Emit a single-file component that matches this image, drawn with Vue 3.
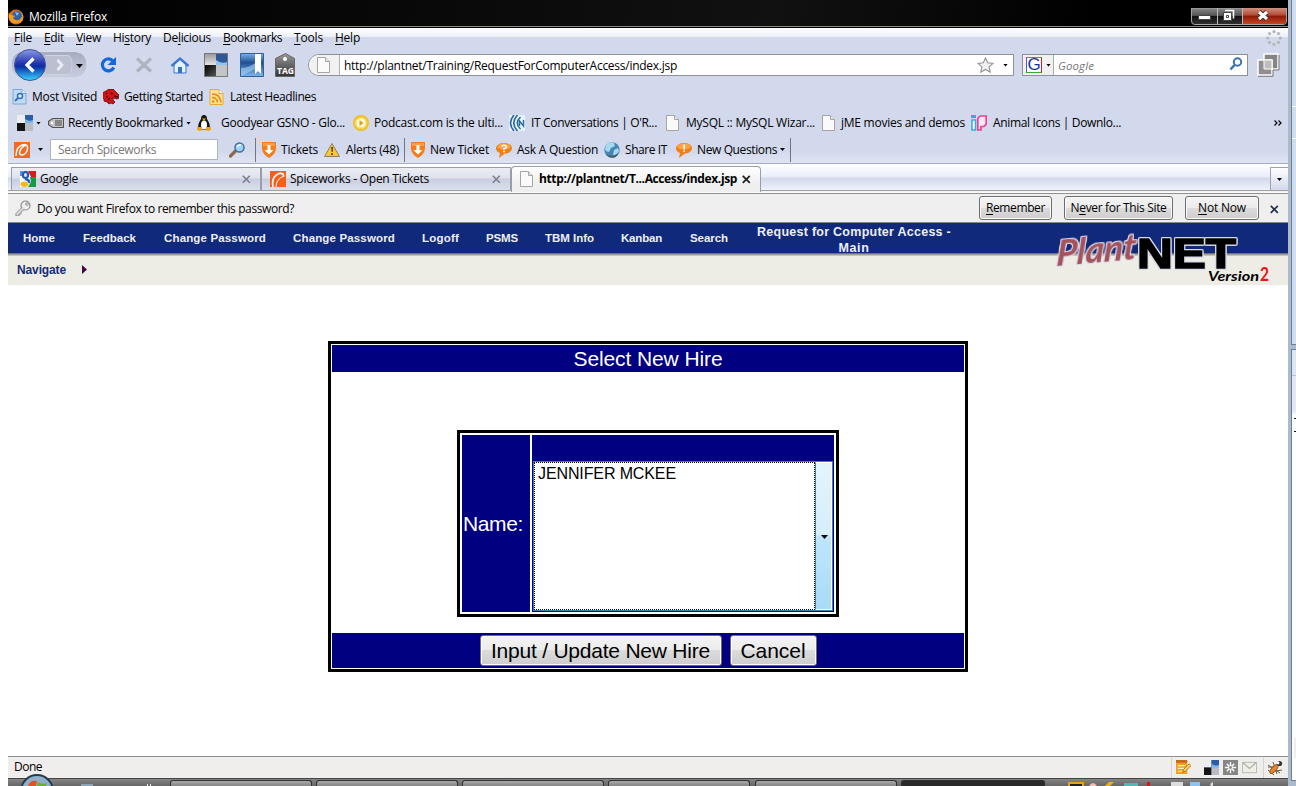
<script setup>
// Sizes a label to a given width by adjusting its tracking.
const vFit = {
  mounted(el, { value }) {
    const n = el.textContent.length
    const natural = el.getBoundingClientRect().width
    if (value && n) el.style.letterSpacing = (value - natural) / n + 'px'
  },
}

// Turns [kind, start, end, content] tuples into items with a leading gap and a width.
function strip(origin, list) {
  let x = origin
  return list.map(([kind, start, end, value, hot]) => {
    const item = { kind, gap: start - x, width: end - start, value, hot }
    x = end
    return item
  })
}
const box = (i) => ({ marginLeft: i.gap + 'px', width: i.width + 'px' })

const page = '<path d="M1.5.5h8l4 4v11h-12z" fill="#fafafa" stroke="#a5a5a5"/><path d="M9.500.5v4h4" fill="#e8e8e8" stroke="#a5a5a5"/>'
const shield = '<path d="M1 0h14v7q-1 6-7 9Q2 13 1 7z" fill="#f57c1a"/><path d="M2 1h12v3H2z" fill="#ff9d45"/><path d="M6.500 3h3v5h3L8 12.500 3.500 8h3z" fill="#fff"/>'
const bubble = '<path d="M8 1c4.500 0 8 2 8 5s-3 5.500-7 5.500L3 16l1-5C1.500 10 0 8.500 0 6.500 0 3 4 1 8 1z" fill="#f0801c"/><ellipse cx="8" cy="4.500" rx="6.500" ry="3" fill="#ffa343"/>'
const squares = '<path d="M0 0h16v16H0z" fill="#6f7782"/><path d="M0 0h8v8H0z" fill="#eceef2"/><path d="M8 0h8v8H8z" fill="#2b5ca5"/><path d="M8 4q4 3 8 1v4H8z" fill="#7fb4ea"/><path d="M0 8h8v8H0z" fill="#151515"/><path d="M8 8h8v8H8z" fill="#b8bcc4"/>'
const icons = {
  page,
  shield,
  squares,
  firefox: '<circle cx="8" cy="8" r="7.500" fill="#e46b10"/><circle cx="9" cy="7" r="5" fill="#2f62a8"/><path d="M1 2q0 4 3 4l3 1-2 2q2 3 6 2l3-3q0-4-2-6 4 3 3 8c-1 5-12 6-14 0Q0 6 1 2z" fill="#f39b1d"/><path d="M7 3l4 1-2 3z" fill="#8fc3e8"/>',
  visited: '<path d="M1 .5h9l4 4V15H1z" fill="#bcdcf4" stroke="#7da8d6"/><path d="M10 .5v4h4" fill="#e8f4fd" stroke="#7da8d6"/><circle cx="8" cy="7" r="2.500" fill="#dcedfb" stroke="#3a6fb8" stroke-width="1.500"/><path d="M6 9l-3 3" stroke="#3a6fb8" stroke-width="2"/>',
  dino: '<path d="M3 2l3-2h4l3 3 3 3v3l-2 1-4-1 0 2 2 2-2 2-2-1-2 1-2-2-3-1 0-2-2-2 1-2-1-2z" fill="#d41414" stroke="#400" stroke-width=".7"/><path d="M8 4l2 1M3 4l1 1M3 8l2 0M5 11l2-2M11 7l4 1" stroke="#300" stroke-width="1.200"/>',
  rss: '<path d="M1 .5h9l4 4v11H1z" fill="#ffe68c" stroke="#dfae35"/><path d="M10 .5v4h4" fill="#fff6cf" stroke="#dfae35"/><circle cx="4.200" cy="12.500" r="1.300" fill="#ee851b"/><path d="M3 8.500q5 0 5.500 5M3 5q8 0 9 8.500" fill="none" stroke="#ee851b" stroke-width="1.700"/>',
  tag: '<path d="M4.500 3h11.500v10H4.500L0 10V6z" fill="#505050"/><path d="M5 4H15v8H5L1.200 9.500v-3z" fill="#c4c4c4"/><path d="M7 5h7v6H7z" fill="#868686"/><circle cx="4" cy="8" r="1.200" fill="#fff"/>',
  tux: '<path d="M8 0q3 0 3 4 3 4 3 8l-2 3H4l-2-3q0-4 3-8 0-4 3-4z" fill="#161616"/><ellipse cx="8" cy="10" rx="3" ry="4.500" fill="#fff"/><path d="M6 3.500h4L8 6zM1 12l4 0 2 3-3 1-3-1zM15 12h-4l-2 3 3 1 3-1z" fill="#eda512"/>',
  podcast: '<circle cx="8" cy="8" r="8" fill="#f3bd20"/><circle cx="8" cy="8" r="6.300" fill="#fbd552"/><circle cx="8" cy="8" r="4.600" fill="#fffbe8"/><path d="M6.500 5l4 3-4 3z" fill="#e89d12"/>',
  waves: '<path d="M0 0h16v16H0z" fill="#e8f1f7"/><path d="M5 0Q-2 8 5 16M8.500 0Q1 8 8.500 16M11.500 2Q5 8 11.500 14" fill="none" stroke="#2b6a9c" stroke-width="1.600"/><path d="M10.500 11V6l4 5V5" fill="none" stroke="#2b6a9c" stroke-width="1.400"/>',
  ip: '<path d="M0 0h5v3H0z" fill="#2eaee0"/><path d="M1 5h3.500v10H1z" fill="#fff" stroke="#2eaee0" stroke-width="1.500"/><path d="M6.800 11V3.500L9 1h6.200v8L13 11.500H10V15H6.800z" fill="#fbe8f2" stroke="#ef3f93" stroke-width="1.700"/>',
  spice: '<path d="M0 0h16v16H0z" fill="#f26a1e"/><path d="M2 14Q2 4 10 2.500q4 0 3.500 4Q13 12 8 13q-3.500 0-2-4 1.500-4 6-6" fill="none" stroke="#fff" stroke-width="1.500"/>',
  spicetab: '<path d="M0 0h16v16H0z" fill="#f4601a"/><path d="M3 16Q1 6 9 2.500q5-1 4.500 3" fill="none" stroke="#fff" stroke-width="1.700"/><path d="M6 16q0-8 8-11" fill="none" stroke="#fff" stroke-width="1"/>',
  glass: '<path d="M7 8.500L1.500 14" stroke="#8a6950" stroke-width="3.200" stroke-linecap="round"/><circle cx="10.500" cy="5.500" r="4.500" fill="#9bd4f7" stroke="#4a6d9c" stroke-width="1.500"/><path d="M8 5q1-2.500 4-2" stroke="#fff" stroke-width="1.500" fill="none"/>',
  warn: '<path d="M8 1.500L15.500 14.500H.5z" fill="#fbc43d" stroke="#8d8060"/><path d="M7.200 5h1.800l-.4 5h-1zM7.200 11.200h1.700V13H7.200z" fill="#4b3a10"/>',
  ask: bubble + '<path d="M5.500 4.500q3-2.500 5 0 0 1.500-2.500 2.300v1" stroke="#fff" stroke-width="1.600" fill="none"/><path d="M7.200 8.800h1.700v1.400H7.200z" fill="#fff"/>',
  bang: bubble + '<path d="M7.200 2.500h2l-.4 5H7.500zM7.300 8.500h1.700v1.600H7.300z" fill="#fff"/>',
  globe: '<circle cx="8" cy="8" r="7.700" fill="#4885b5"/><path d="M2 3q4-4 8-2l1 3-4 2-2 4-3-1-1-2zM10 8l4-2 1 3-3 5-3-1z" fill="#a7d8ee"/><path d="M2 12q6 4 12-1-1 5-6 4.700-4 0-6-3.700z" fill="#46606c"/>',
  google: '<path d="M0 0h16v16H0z" fill="#fff"/><path d="M8 0h8v6h-5z" fill="#dc1a18"/><path d="M10 6h6v10H8l3-5z" fill="#159a48"/><path d="M0 0h3v5H0z" fill="#5b94e6"/><ellipse cx="5.500" cy="4" rx="2.600" ry="3" fill="#dfe9fa" stroke="#2459b5" stroke-width="2.200"/><path d="M5 8q5 1 4 4" fill="none" stroke="#2459b5" stroke-width="2.500"/><ellipse cx="4.500" cy="13.300" rx="4" ry="2.700" fill="#f5b81c"/>',
  key: '<circle cx="10.500" cy="5.500" r="4.500" fill="#eee" stroke="#8b8b8b" stroke-width="1.200"/><path d="M7 7.500L1 13.500V16h3v-2h2v-2l3-2.500" fill="#ddd" stroke="#8b8b8b"/><circle cx="12" cy="4" r="1.300" fill="#fff" stroke="#8b8b8b"/>',
  note: '<path d="M0 1h12v14H0z" fill="#f0a21e"/><path d="M0 0h12v3H0z" fill="#c96a10"/><path d="M2 6h8M2 9h7M2 12h6" stroke="#fff1c0" stroke-width="1.200"/><path d="M7 13l1-3 6-6 2 2-6 6z" fill="#ffd05a" stroke="#a85c10" stroke-width=".8"/>',
  flake: '<path d="M0 0h16v16H0z" fill="#858585"/><path d="M8 2v12M2 8h12M4 4l8 8M12 4l-8 8" stroke="#fff" stroke-width="1.400"/><circle cx="8" cy="8" r="1.500" fill="#858585"/>',
  mail: '<path d="M.5 2.500h15v11H.5z" fill="#efefe8" stroke="#b3b8ac"/><path d="M1 3l7 6 7-6" fill="none" stroke="#a9b39f" stroke-width="1.300"/>',
  bug: '<path d="M1 5l12 8M1 10l6 5M6 2l4 12M1 7h6M8 11l7-1" stroke="#67594a" stroke-width="1"/><ellipse cx="7" cy="9" rx="5.500" ry="2.300" transform="rotate(-48 7 9)" fill="#e8842c" stroke="#9b5318"/><circle cx="12.500" cy="3.500" r="2.600" fill="#333"/><circle cx="11" cy="3" r="1.400" fill="#fff"/>',
}

const menus = strip(8, [
  ['text', 14, 32, ['', 'F', 'ile']],
  ['text', 44, 64, ['', 'E', 'dit']],
  ['text', 76, 101, ['', 'V', 'iew']],
  ['text', 113, 151, ['Hi', 's', 'tory']],
  ['text', 163, 211, ['De', 'l', 'icious']],
  ['text', 223, 282, ['', 'B', 'ookmarks']],
  ['text', 294, 323, ['', 'T', 'ools']],
  ['text', 335, 360, ['', 'H', 'elp']],
])

const bars = [
  strip(8, [
    ['icon', 12, 27, 'visited'], ['text', 32, 97, 'Most Visited'],
    ['icon', 103, 119, 'dino'], ['text', 124, 203, 'Getting Started'],
    ['icon', 209, 225, 'rss'], ['text', 230, 316, 'Latest Headlines'],
  ]),
  strip(8, [
    ['icon', 17, 33, 'squares'], ['arrow', 36, 41],
    ['icon', 48, 64, 'tag'], ['text', 68, 183, 'Recently Bookmarked'], ['arrow', 186, 191],
    ['icon', 196, 212, 'tux'], ['text', 221, 345, 'Goodyear GSNO - Glo...'],
    ['icon', 353, 369, 'podcast'], ['text', 374, 503, 'Podcast.com is the ulti...'],
    ['icon', 509, 525, 'waves'], ['text', 531, 657, "IT Conversations | O'R..."],
    ['icon', 665, 681, 'page'], ['text', 686, 815, 'MySQL :: MySQL Wizar...'],
    ['icon', 821, 837, 'page'], ['text', 841, 965, 'jME movies and demos'],
    ['icon', 971, 987, 'ip'], ['text', 993, 1121, 'Animal Icons | Downlo...'],
    ['more', 1274, 1282],
  ]),
  strip(8, [
    ['icon', 14, 30, 'spice'], ['arrow', 38, 43], ['input', 50, 218, 'Search Spiceworks'],
    ['icon', 229, 245, 'glass'], ['sep', 255, 256],
    ['icon', 261, 277, 'shield'], ['text', 281, 318, 'Tickets'],
    ['icon', 324, 340, 'warn'], ['text', 346, 399, 'Alerts (48)'], ['sep', 404, 405],
    ['icon', 410, 426, 'shield'], ['text', 430, 489, 'New Ticket'],
    ['icon', 496, 512, 'ask'], ['text', 517, 598, 'Ask A Question'],
    ['icon', 604, 620, 'globe'], ['text', 625, 667, 'Share IT'],
    ['icon', 676, 692, 'bang'], ['text', 697, 777, 'New Questions'],
    ['arrow', 780, 785], ['sep', 790, 791],
  ]),
]

const nav = strip(8, [
  ['text', 23, 55, 'Home'], ['text', 83, 136, 'Feedback'], ['text', 164, 266, 'Change Password'],
  ['text', 293, 395, 'Change Password'], ['text', 422, 459, 'Logoff'], ['text', 486, 518, 'PSMS'],
  ['text', 545, 594, 'TBM Info'], ['text', 621, 662, 'Kanban'], ['text', 690, 728, 'Search'],
])

const prompts = strip(979, [
  ['b', 979, 1052, ['', 'R', 'emember'], 59],
  ['b', 1064, 1173, ['N', 'e', 'ver for This Site'], 96],
  ['b', 1185, 1259, ['', 'N', 'ot Now'], 48],
])

const tasks = strip(170, [
  ['', 170, 312], ['', 316, 458], ['', 462, 604], ['', 608, 750], ['', 755, 897], ['active', 901, 1045],
])
const dots = Array.from({ length: 8 }, (_, i) => [8 + 6.3 * Math.cos(i * Math.PI / 4), 8 + 6.3 * Math.sin(i * Math.PI / 4)])
</script>

<template>
  <div class="screen">
    <div class="window">
      <header class="title">
        <svg class="ff" viewBox="0 0 16 16" v-html="icons.firefox"></svg>
        <span v-fit="78">Mozilla Firefox</span>
        <div class="controls">
          <svg width="96" height="18" viewBox="0 0 96 18">
            <defs>
              <linearGradient id="dark" x2="0" y2="1"><stop offset="0" stop-color="#8a8a8a" /><stop offset=".45" stop-color="#555" /><stop offset=".5" stop-color="#111" /><stop offset="1" stop-color="#333" /></linearGradient>
              <linearGradient id="red" x2="0" y2="1"><stop offset="0" stop-color="#d09080" /><stop offset=".45" stop-color="#b34a35" /><stop offset=".5" stop-color="#8c1806" /><stop offset="1" stop-color="#c84522" /></linearGradient>
            </defs>
            <path d="M.5 0v13q0 3.500 3 3.500h89q3 0 3-3.500V0z" fill="url(#dark)" stroke="#a5a5a5" />
            <path d="M52 0h43v13q0 3-3 3H52z" fill="url(#red)" />
            <path d="M26.500 0v16M51.500 0v16" stroke="#bbb" />
            <path d="M7.500 7.500h12v4h-12z" fill="#fff" stroke="#444" />
            <path d="M34 2.500h8.500v8" fill="none" stroke="#fff" stroke-width="1.500" />
            <path d="M32.500 4.500h8v8h-8z" fill="#fff" stroke="#444" /><path d="M35.500 7.500h2v2h-2z" fill="#fff" stroke="#444" />
            <path d="M68 4l8 7m0-7l-8 7" stroke="#433" stroke-width="5" /><path d="M68 4l8 7m0-7l-8 7" stroke="#fff" stroke-width="3" />
          </svg>
        </div>
      </header>

      <nav class="menu">
        <span v-for="m in menus" :key="m.value[2]" class="cell" :style="box(m)"><span v-fit="m.width">{{ m.value[0] }}<u>{{ m.value[1] }}</u>{{ m.value[2] }}</span></span>
        <svg class="throbber" viewBox="0 0 16 16"><circle v-for="(d, i) in dots" :key="i" :cx="d[0]" :cy="d[1]" r="1.600" fill="#b4b6bc" /></svg>
      </nav>

      <div class="tools">
        <svg width="292" height="34" viewBox="8 49 292 34">
          <defs>
            <linearGradient id="orb" x2="0" y2="1"><stop offset="0" stop-color="#8a9be6" /><stop offset=".45" stop-color="#2434ad" /><stop offset=".55" stop-color="#0b2fa5" /><stop offset="1" stop-color="#38d6ff" /></linearGradient>
            <linearGradient id="pill" x2="0" y2="1"><stop offset="0" stop-color="#a6abbf" /><stop offset="1" stop-color="#c9cee0" /></linearGradient>
            <linearGradient id="sq" x2="0" y2="1"><stop offset="0" stop-color="#78b2e8" /><stop offset=".4" stop-color="#1f4f92" /><stop offset="1" stop-color="#7eb8ee" /></linearGradient>
            <linearGradient id="gr" x2="0" y2="1"><stop offset="0" stop-color="#999" /><stop offset="1" stop-color="#333" /></linearGradient>
            <linearGradient id="lite" x2="0" y2="1"><stop offset="0" stop-color="#9b9b9b" /><stop offset="1" stop-color="#e4e4e4" /></linearGradient>
            <linearGradient id="coal" x2="1" y2="1"><stop offset="0" stop-color="#000" /><stop offset="1" stop-color="#555" /></linearGradient>
          </defs>
          <path d="M20 51.500H76q11 2 11 13t-11 13.500H20q-9-3-9-13t9-13.500z" fill="url(#pill)" stroke="#d9deec" />
          <path d="M45 55.500h23q4 1 4 9t-4 10H45" fill="#bbc0d1" stroke="#cfd4e4" />
          <circle cx="30" cy="65" r="15.500" fill="url(#orb)" stroke="#4254a0" />
          <path d="M33.500 58.500L27 65l6.500 6.500" fill="none" stroke="#fff" stroke-width="3.200" />
          <path d="M57.500 60l4.500 5-4.500 5" fill="none" stroke="#e9ecf5" stroke-width="2.800" />
          <path d="M76 64h7l-3.500 4z" fill="#000" />
          <path d="M113 61A6 6 0 1 0 113.800 67.500" fill="none" stroke="#1767dc" stroke-width="3.200" /><path d="M116 57v8h-8.500z" fill="#1767dc" />
          <path d="M137 58.500l14 13m0-13l-14 13" stroke="#aeb3bd" stroke-width="3.200" />
          <path d="M174 64.500v8.500h12v-8.500l-6-5.500z" fill="#e4f1ff" stroke="#3c73c6" /><path d="M171.500 66L180 58.500l8.500 7.500" fill="none" stroke="#3c78d2" stroke-width="2.400" /><path d="M178 67h4v6h-4z" fill="#3771c7" />
          <path d="M204 53h24v24h-24z" fill="#777" /><path d="M205 54h11v11h-11z" fill="url(#lite)" /><path d="M216 54h11v11h-11z" fill="#2c5798" /><path d="M216 60q5 4 11 2v3h-11z" fill="#8cc3ef" /><path d="M205 65h11v11h-11z" fill="url(#coal)" /><path d="M216 65h11v11h-11z" fill="#c4c4c4" />
          <path d="M240.500 53.500h23v23h-23z" fill="url(#sq)" stroke="#315f99" /><path d="M255 54h6v20l-3-3-3 3z" fill="#fff" /><path d="M241 68q8 0 14-5v6q-8 4-14 7z" fill="#a6d2f6" opacity=".6" />
          <path d="M275.500 58.500l10-5 9 5v18h-19z" fill="url(#gr)" stroke="#666" /><circle cx="285" cy="59" r="2" fill="#fff" />
          <text x="277" y="73.500" textLength="17" lengthAdjust="spacingAndGlyphs" font-size="8.500" font-weight="700" fill="#fff">TAG</text>
        </svg>
        <div class="url">
          <div class="favicon"><svg width="16" height="16" viewBox="0 0 16 16" v-html="icons.page"></svg></div>
          <span v-fit="333">http://plantnet/Training/RequestForComputerAccess/index.jsp</span>
          <svg class="star" width="17" height="16" viewBox="0 0 17 16"><path d="M8.500 1l2.200 4.800 5.300.6-3.900 3.500 1.100 5.200-4.700-2.700-4.700 2.700 1.100-5.200L1 6.400l5.300-.6z" fill="#f1f1f1" stroke="#949494" stroke-width="1.100" /></svg>
          <i class="arrow"></i>
        </div>
        <div class="search">
          <div class="engine"><b>G</b><i class="arrow"></i></div>
          <em v-fit="36">Google</em>
          <svg width="14" height="14" viewBox="0 0 14 14"><circle cx="8.500" cy="5" r="3.700" fill="#fff" stroke="#3c73ae" stroke-width="2" /><path d="M5.500 8L1.500 12.500" stroke="#3c73ae" stroke-width="2.600" /></svg>
        </div>
        <svg class="stack" width="24" height="24" viewBox="0 0 24 24"><path d="M8 1h14v15H8z" fill="#858585" stroke="#fff" stroke-width="1.500" /><path d="M2 7h14v15H2z" fill="#8f8f8f" stroke="#fff" stroke-width="1.500" /><path d="M8 7h8v9H8z" fill="#bdbdbd" stroke="#fff" /><path d="M2 23.300h15V17M17 17h6V2" fill="none" stroke="#777" /></svg>
      </div>

      <div v-for="(bar, n) in bars" :key="n" class="bar" :class="'bar' + n">
        <span v-for="(i, k) in bar" :key="k" class="cell" :style="box(i)">
          <svg v-if="i.kind === 'icon'" width="16" height="16" viewBox="0 0 16 16" v-html="icons[i.value]"></svg>
          <span v-else-if="i.kind === 'text'" v-fit="i.width">{{ i.value }}</span>
          <i v-else-if="i.kind === 'arrow'" class="arrow"></i>
          <svg v-else-if="i.kind === 'more'" width="8" height="6" viewBox="0 0 8 6"><path d="M.5.5L3 3 .5 5.500M4.500.5L7 3 4.500 5.500" fill="none" stroke="#000" stroke-width="1.200" /></svg>
          <span v-else-if="i.kind === 'input'" class="field"><span v-fit="98">{{ i.value }}</span></span>
          <i v-else class="sep"></i>
        </span>
      </div>

      <div class="tabs">
        <div class="tab">
          <svg width="16" height="16" viewBox="0 0 16 16" v-html="icons.google"></svg>
          <span v-fit="38">Google</span>
          <svg class="close" width="9" height="9" viewBox="0 0 9 9"><path d="M.8.8l7 7m0-7l-7 7" stroke="#777c8c" stroke-width="1.500" /></svg>
        </div>
        <div class="tab second">
          <svg width="16" height="16" viewBox="0 0 16 16" v-html="icons.spicetab"></svg>
          <span v-fit="139">Spiceworks - Open Tickets</span>
          <svg class="close" width="9" height="9" viewBox="0 0 9 9"><path d="M.8.8l7 7m0-7l-7 7" stroke="#777c8c" stroke-width="1.500" /></svg>
        </div>
        <div class="tab current">
          <svg width="16" height="16" viewBox="0 0 16 16" v-html="icons.page"></svg>
          <span v-fit="198">http://plantnet/T...Access/index.jsp</span>
          <svg class="close" width="9" height="9" viewBox="0 0 9 9"><path d="M.8.8l7 7m0-7l-7 7" stroke="#222" stroke-width="1.800" /></svg>
        </div>
        <div class="all"><i class="arrow"></i></div>
      </div>

      <div class="prompt">
        <svg width="16" height="16" viewBox="0 0 16 16" v-html="icons.key"></svg>
        <span v-fit="257">Do you want Firefox to remember this password?</span>
        <div class="answers">
          <button v-for="p in prompts" :key="p.value[2]" :style="box(p)"><span v-fit="p.hot">{{ p.value[0] }}<u>{{ p.value[1] }}</u>{{ p.value[2] }}</span></button>
          <svg width="9" height="9" viewBox="0 0 9 9"><path d="M.8.8l7 7m0-7l-7 7" stroke="#26304a" stroke-width="1.700" /></svg>
        </div>
      </div>

      <div class="site">
        <div class="nav">
          <span v-for="(i, k) in nav" :key="k" class="cell" :style="box(i)"><span v-fit="i.width">{{ i.value }}</span></span>
          <div class="heading"><span v-fit="194">Request for Computer Access -</span><br /><span v-fit="31">Main</span></div>
        </div>
        <div class="subnav"><span v-fit="49">Navigate</span><i></i></div>
        <svg class="logo" width="242" height="62" viewBox="0 0 242 62">
          <g transform="translate(10 43) rotate(-5) skewX(-8)"><text class="halo" textLength="80" lengthAdjust="spacingAndGlyphs" font-family="Lato, sans-serif" font-style="italic" font-weight="700" font-size="35" fill="#a4525c">Plant</text></g>
          <text class="halo" x="91" y="45" textLength="99" lengthAdjust="spacingAndGlyphs" font-family="Liberation Sans, sans-serif" font-weight="700" font-size="42" fill="#000" stroke="#000" stroke-width="1.600">NET</text>
          <text x="162" y="58" textLength="51" lengthAdjust="spacingAndGlyphs" font-family="Lato, sans-serif" font-style="italic" font-weight="700" font-size="14" fill="#000">Version</text>
          <text x="214" y="58" textLength="9" lengthAdjust="spacingAndGlyphs" font-family="Lato, sans-serif" font-size="19" fill="#e8151b">2</text>
        </svg>
      </div>

      <main>
        <section class="form">
          <h1><span v-fit="149">Select New Hire</span></h1>
          <div class="picker">
            <label><span v-fit="60">Name:</span></label>
            <div class="choice">
              <div class="list">
                <div class="value"><span v-fit="138">JENNIFER MCKEE</span></div>
                <div class="drop"><svg width="7" height="4"><path d="M0 0h7L3.500 4z" /></svg></div>
              </div>
            </div>
          </div>
          <footer>
            <button class="wide"><span v-fit="219">Input / Update New Hire</span></button>
            <button><span v-fit="65">Cancel</span></button>
          </footer>
        </section>
      </main>

      <div class="status">
        <span v-fit="28">Done</span>
        <div class="addons">
          <i></i>
          <svg v-for="n in ['note', 'squares', 'flake', 'mail']" :key="n" :class="n" width="15" height="15" viewBox="0 0 16 16" v-html="icons[n]"></svg>
          <i></i>
          <svg class="bug" width="16" height="16" viewBox="0 0 16 16" v-html="icons.bug"></svg>
        </div>
      </div>

      <div class="taskbar">
        <svg class="start" width="36" height="12" viewBox="0 0 36 12"><circle cx="18" cy="17" r="16" fill="#8fb0c8" stroke="#243b4d" stroke-width="2" /><path d="M9 12q2-6 9-5l-1 5z" fill="#dd5527" /><path d="M18 12l1-4q4 3 9 1l-1 3z" fill="#6caf35" /></svg>
        <svg class="quick" width="103" height="3"><path d="M14 1h12v2H14z" fill="#8ba4b8" /><path d="M80 1h1v2h-1zM83 1h1v2h-1z" fill="#eee" /></svg>
        <div v-for="(t, k) in tasks" :key="k" class="task" :class="t.kind" :style="box(t)"></div>
        <svg class="tray" width="150" height="4"><path d="M1 0h16v4H1z" fill="#e6a11a" /><path d="M3 2h12v2H3z" fill="#222" /><path d="M22 4q4-6 8 0z" fill="#f0c0b8" /><path d="M38 4l4-4h5l-4 4z" fill="#ebb218" /><path d="M57 1h14v3H57z" fill="#55b7b4" /><path d="M80 0h3v4h-3z" fill="#d11" /><path d="M104 0h12v4h-12z" fill="#ddd" /><path d="M123 0h10v4h-10z" fill="#8dc4ef" /><path d="M143 2l3-2v4h-2z" fill="#ddd" /></svg>
      </div>
    </div>
    <aside><div class="upper"><i></i><i></i></div><div class="lower"><b></b><i></i><i></i><em></em></div></aside>
  </div>
</template>

<style>
body { background: #fff; overflow: hidden; }
</style>

<style scoped>
* { box-sizing: border-box; }
.screen { display: flex; width: 1296px; height: 786px; padding-left: 8px; overflow: hidden; font: 12px/16px "Open Sans", "Noto Sans", sans-serif; color: #000; background: #fff; }
.window { width: 1280px; display: flex; flex-direction: column; }
.screen span { white-space: pre; }
.cell { flex: none; display: flex; align-items: center; }
.cell svg, .screen svg { flex: none; display: block; }
u { text-underline-offset: 2px; text-decoration-thickness: 1px; }
.arrow { display: block; width: 5px; height: 3px; background: #000; clip-path: polygon(0 0, 100% 0, 50% 100%); flex: none; }

.title { height: 28px; flex: none; display: flex; align-items: flex-start; background: linear-gradient(100deg, #000 0, #080808 30%, #111 60%, #000 85%); border-bottom: 1px solid #000; box-shadow: inset 0 -1px #8b8b8b; color: #fff; }
.title span { margin: 9px 0 0 5px; }
.ff { width: 16px; height: 16px; margin-top: 9px; }
.controls { margin: 8px 1px 0 auto; }

.menu { height: 21px; flex: none; display: flex; align-items: center; padding-bottom: 1px; background: linear-gradient(#fff 0, #eceff7 9px, #d3d9ec 9px); }
.throbber { width: 16px; height: 16px; margin: -1px 6px 0 auto; }

.tools { height: 34px; flex: none; display: flex; align-items: flex-start; background: #d3d9ec; }
.url { display: flex; align-items: center; width: 706px; height: 22px; margin: 5px 0 0 8px; border: 1px solid #8f9199; border-radius: 11px 0 0 11px; background: #fff; overflow: hidden; }
.url > span { margin-top: 2px; }
.favicon { width: 31px; height: 20px; padding: 2px 0 0 7px; background: #f1f1f1; border-right: 1px solid #b0b0b0; margin-right: 4px; }
.star { margin: 0 9px 0 auto; }
.url .arrow { margin-right: 5px; }
.search { display: flex; align-items: center; width: 226px; height: 22px; margin: 5px 0 0 8px; border: 1px solid #8f9199; background: #fff; color: #777; }
.search em { font-size: 11.5px; margin: 2px 0 0 4px; }
.search > svg { margin: -2px 4px 0 auto; }
.engine { width: 31px; height: 20px; display: flex; align-items: center; background: #f1f1f1; border-right: 1px solid #aaa; }
.engine b { width: 16px; height: 16px; margin: 0 4px 0 3px; border: 1px solid #35ad38; border-left-color: #3868d0; border-right-color: #cb2020; background: #fff; color: #14349d; font: 17px/14px "Liberation Sans", sans-serif; text-align: center; }
.stack { margin: 4px 0 0 8px; }

.bar { flex: none; display: flex; align-items: center; background: #d3d9ec; }
.bar0 { height: 27px; }
.bar1 { height: 26px; }
.bar2 { height: 28px; border-bottom: 1px solid #a8aec2; background: linear-gradient(#d3d9ec 55%, #dfe4f4); }
.field { width: 168px; height: 21px; padding: 2px 7px; border: 1px solid #b0b4c0; background: #fff; color: #777; }
.sep { width: 1px; height: 24px; background: #73757d; }

.tabs { height: 30px; flex: none; display: flex; align-items: flex-start; padding: 3px 0 0 3px; background: linear-gradient(#fff 0, #e9edf8 13px, #d3d9ec 14px, #eef1fa 26px, #a0a0a0 26px, #a0a0a0 27px, #efefef 27px, #fff 29px); border-bottom: 1px solid #909090; }
.tab { display: flex; align-items: center; width: 250px; height: 23px; padding: 0 9px 0 8px; border: 1px solid #999da8; border-bottom: 0; background: linear-gradient(#eceef4, #dfe2ec 45%, #c9cee0 50%, #dbe0ee); }
.tab span { margin-left: 4px; }
.tab .close { margin: 1px 0 0 auto; }
.current { height: 26px; margin-top: -1px; padding: 0 9px 2px 7px; border-radius: 4px 4px 0 0; background: linear-gradient(#fff, #efefef 70%); font-weight: 700; }
.all { width: 18px; height: 23px; margin-left: auto; padding: 10px 0 0 6px; border: 1px solid #a0a3ad; border-width: 1px 0 0 1px; background: linear-gradient(#fff, #d3d9ec); }

.prompt { height: 29px; flex: none; display: flex; align-items: center; padding: 0 9px 0 7px; background: #efefef; border-bottom: 1px solid #888; }
.prompt > span { margin: 1px 0 0 6px; }
.answers { display: flex; align-items: center; margin-left: auto; }
.answers svg { margin: 2px 0 0 11px; }
button { padding: 0; border: 1px solid #6d6d6d; border-radius: 3px; background: linear-gradient(#f4f4f4 0, #ebebeb 49%, #dcdcdc 50%, #cdcdcd); box-shadow: inset 0 0 0 1px #fafafa; color: #000; }
.answers button { height: 24px; font: 12px/16px "Open Sans", sans-serif; }

.site { position: relative; flex: none; height: 62px; font-family: "Liberation Sans", Arial, sans-serif; font-weight: 700; }
.nav { height: 33px; display: flex; align-items: flex-start; background: linear-gradient(#11297b 30px, #55575e 30px, #8e8e8e 31px, #d5d5cf 33px); color: #edeff5; font-size: 11.5px; }
.nav .cell { margin-top: 7px; }
.heading { width: 250px; margin-left: 1px; text-align: center; font-size: 12.5px; padding-top: 1px; }
.subnav { height: 29px; display: flex; align-items: center; padding: 0 0 2px 9px; background: #eeede5; color: #172c72; font-size: 12px; }
.subnav i { width: 5px; height: 9px; margin-left: 16px; background: #40083f; clip-path: polygon(0 0, 100% 50%, 0 100%); }
.logo { position: absolute; right: 0; top: 0; }
.halo { filter: drop-shadow(1px 0 0 #d9dbe8) drop-shadow(-1px 0 0 #d9dbe8) drop-shadow(0 1px 0 #d9dbe8) drop-shadow(0 -1px 0 #d9dbe8); }

main { flex: 1; min-height: 0; display: flex; justify-content: center; align-items: flex-start; padding-top: 56px; background: #fff; font-family: "Liberation Sans", Arial, sans-serif; }
.form { width: 640px; height: 331px; border: 3px solid #000; padding: 1px; display: flex; flex-direction: column; align-items: center; }
h1 { width: 632px; height: 27px; margin: 0; background: #000080; color: #fff; font-size: 21px; line-height: 28px; font-weight: 400; text-align: center; }
.picker { display: flex; gap: 2px; width: 382px; height: 187px; margin-top: 58px; padding: 2px; border: 3px solid #000; }
.picker label { width: 68px; background: #000080; color: #fff; font-size: 21px; line-height: 178px; padding-left: 1px; }
.choice { width: 302px; padding: 26px 1px 1px; background: #000080; }
.list { display: flex; height: 150px; border: 1px solid #3c7fb1; background: #fff; }
.value { flex: 1; padding: 2px 0 0 3px; border: 1px dotted #000; font-size: 16px; line-height: 18px; }
.drop { width: 17px; border: 1px solid #fff; border-left: 1px solid #3c7fb1; background: linear-gradient(#e3f4fc, #d6eefb 49%, #bee6fd 50%, #a9dbf5); display: flex; align-items: center; justify-content: center; padding: 1px 0 0 1px; }
footer { display: flex; justify-content: center; gap: 8px; width: 632px; height: 35px; margin-top: 16px; padding-top: 2px; background: #000080; }
footer button { width: 87px; height: 31px; font: 21px/28px "Liberation Sans", Arial, sans-serif; }
footer .wide { width: 242px; }

.status { height: 22px; flex: none; display: flex; align-items: center; padding-left: 6px; border-top: 1px solid #8f8f8f; background: #f0eeec; }
.status > span { margin-top: -1px; }
.addons { display: flex; align-items: center; margin-left: auto; height: 20px; }
.addons i { width: 1px; height: 20px; background: #d2d2d2; }
.note { margin: 0 13px 0 4px; }
.flake { margin: 0 4px; }
.mail { margin-right: 6px; }
.bug { margin: 0 5px 0 3px; }
.taskbar { height: 8px; flex: none; display: flex; align-items: flex-end; background: linear-gradient(#444 1px, #858585 1px, #666); }
.start { margin: 0 0 0 11px; }
.quick { margin-left: 12px; }
.task { height: 6px; border: 1px solid #303030; border-bottom: 0; border-radius: 3px 3px 0 0; background: linear-gradient(#aaa, #858585); flex: none; }
.task.active { background: #292929; }
.tray { margin-left: 22px; }

aside { width: 8px; padding-left: 3px; background: #abbacd; display: flex; flex-direction: column; gap: 4px; }
.upper { height: 345px; padding-top: 106px; border-left: 1px solid #6d7f96; border-bottom: 1px solid #6d7f96; background: #d0ddee; }
.upper i { display: block; height: 1px; margin-bottom: 31px; background: #fff; }
.lower { height: 432px; border: 1px solid #6d7f96; border-right: 0; padding-left: 2px; background: linear-gradient(#dde5f0 25px, #8fa0b8 25px, #e1e8f1 26px, #e1e8f1 60px, #fff 66px); }
.lower b { display: block; height: 68px; }
.lower i { display: block; height: 1px; margin-bottom: 12px; background: #111; }
.lower em { display: block; height: 20px; margin-top: 306px; background: #eee; }
</style>
